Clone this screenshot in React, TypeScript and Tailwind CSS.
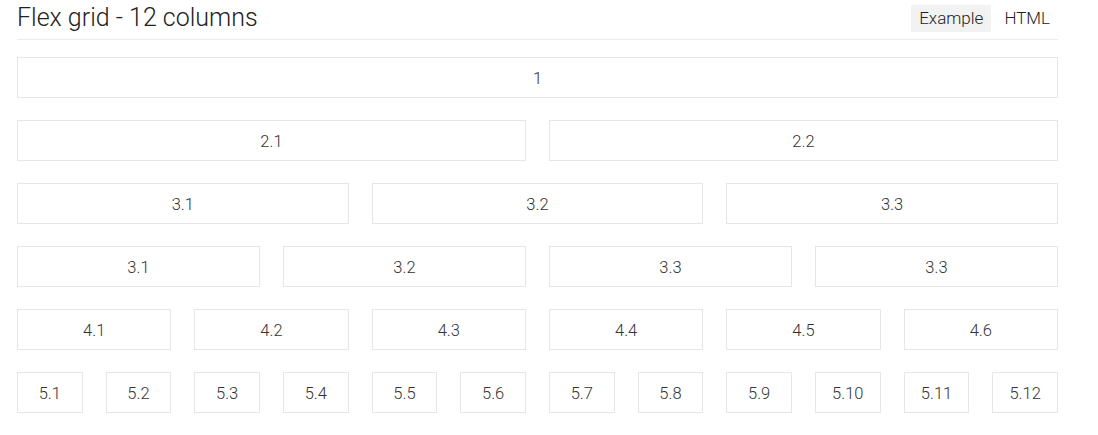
const ROWS: { span: string; labels: string[] }[] = [
  { span: "col-span-12", labels: ["1"] },
  { span: "col-span-6", labels: ["2.1", "2.2"] },
  { span: "col-span-4", labels: ["3.1", "3.2", "3.3"] },
  { span: "col-span-3", labels: ["3.1", "3.2", "3.3", "3.3"] },
  { span: "col-span-2", labels: ["4.1", "4.2", "4.3", "4.4", "4.5", "4.6"] },
  {
    span: "col-span-1",
    labels: ["5.1", "5.2", "5.3", "5.4", "5.5", "5.6", "5.7", "5.8", "5.9", "5.10", "5.11", "5.12"],
  },
];

export default function App() {
  return (
    <div
      className="h-[435px] w-[1098px] bg-white pl-[17px] pr-[40px] text-[#333]"
      style={{ fontFamily: "Roboto, 'Liberation Sans', sans-serif" }}
    >
      <div className="flex h-[40px] items-center justify-between border-b border-[#ebebeb]">
        <h2 className="mt-[-3px] text-[25px] leading-[30px] font-light text-[#222]">
          Flex grid - 12 columns
        </h2>
        <div className="mt-[-2px] flex items-center gap-[5px] text-[17px] font-light">
          <span className="flex h-[27px] items-center bg-[#f2f2f2] px-[8px] text-[#222]">Example</span>
          <span className="flex h-[27px] items-center px-[8px] text-[#222]">HTML</span>
        </div>
      </div>

      <div className="mt-[17px] grid grid-cols-12 gap-x-[23px] gap-y-[22px]">
        {ROWS.map((row, i) =>
          row.labels.map((label, j) => (
            <div
              key={`${i}-${j}`}
              className={`${row.span} flex h-[41px] items-center justify-center border border-[#e6e6e6] pt-[3px] text-[16.5px] font-light text-[#333]`}
            >
              {label}
            </div>
          )),
        )}
      </div>
    </div>
  );
}
